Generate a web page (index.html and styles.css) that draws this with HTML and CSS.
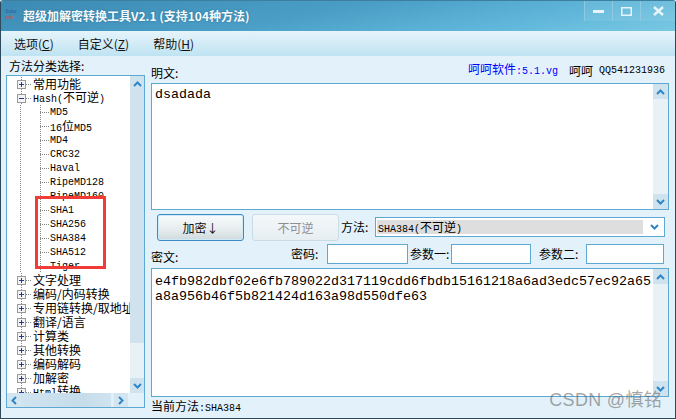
FILE: index.html
```html
<!DOCTYPE html>
<html lang="zh">
<head>
<meta charset="utf-8">
<title>超级加解密转换工具</title>
<link rel="stylesheet" href="styles.css">
</head>
<body>
<div class="window">
  <header class="titlebar">
    <div class="logo"><span class="logo-a">Suko</span><span class="logo-b">soft</span></div>
    <div class="title">超级加解密转换工具V2.1 (支持104种方法)</div>
    <div class="controls">
      <div class="ctl"><svg width="11" height="4" viewBox="0 0 11 4"><rect width="11" height="3" y="1" fill="#e8f4fa"/></svg></div>
      <div class="ctl"><svg width="11" height="9" viewBox="0 0 11 9"><rect x=".75" y=".75" width="9.5" height="7.5" fill="none" stroke="#e8f4fa" stroke-width="1.5"/></svg></div>
      <div class="ctl ctl-x"><svg width="11" height="10" viewBox="0 0 11 10"><path d="M1 1l9 8M10 1l-9 8" stroke="#e8f4fa" stroke-width="2.4"/></svg></div>
    </div>
  </header>
  <nav class="menubar">
    <span class="menu">选项(<u>C</u>)</span>
    <span class="menu">自定义(<u>Z</u>)</span>
    <span class="menu">帮助(<u>H</u>)</span>
  </nav>
  <main class="client">
    <section class="left">
      <div class="left-label">方法分类选择:</div>
      <div class="tree-box">
        <div class="tree-top">
          <div class="tree">
            <div class="row top vline-end"><svg class="box" viewBox="0 0 9 9"><rect x=".5" y=".5" width="8" height="8" fill="#f4f4f4" stroke="#9a9a9a"/><path d="M2 4.5h5M4.5 2v5" stroke="#1f3f8f"/></svg><i class="dash"></i><span class="cjk">常用功能</span></div>
            <div class="row top vline"><svg class="box" viewBox="0 0 9 9"><rect x=".5" y=".5" width="8" height="8" fill="#f4f4f4" stroke="#9a9a9a"/><path d="M2 4.5h5" stroke="#1f3f8f"/></svg><i class="dash"></i><span>Hash(<span class="cjk">不可逆</span>)</span></div>
            <div class="row child"><i class="dash2"></i><span class="leaf">MD5</span></div>
            <div class="row child"><i class="dash2"></i><span class="leaf">16<span class="cjk">位</span>MD5</span></div>
            <div class="row child"><i class="dash2"></i><span class="leaf">MD4</span></div>
            <div class="row child"><i class="dash2"></i><span class="leaf">CRC32</span></div>
            <div class="row child"><i class="dash2"></i><span class="leaf">Haval</span></div>
            <div class="row child"><i class="dash2"></i><span class="leaf">RipeMD128</span></div>
            <div class="row child"><i class="dash2"></i><span class="leaf">RipeMD160</span></div>
            <div class="row child"><i class="dash2"></i><span class="leaf">SHA1</span></div>
            <div class="row child"><i class="dash2"></i><span class="leaf">SHA256</span></div>
            <div class="row child"><i class="dash2"></i><span class="leaf">SHA384</span></div>
            <div class="row child"><i class="dash2"></i><span class="leaf">SHA512</span></div>
            <div class="row child"><i class="dash2"></i><span class="leaf">Tiger</span></div>
            <div class="row top vline"><svg class="box" viewBox="0 0 9 9"><rect x=".5" y=".5" width="8" height="8" fill="#f4f4f4" stroke="#9a9a9a"/><path d="M2 4.5h5M4.5 2v5" stroke="#1f3f8f"/></svg><i class="dash"></i><span class="cjk">文字处理</span></div>
            <div class="row top vline"><svg class="box" viewBox="0 0 9 9"><rect x=".5" y=".5" width="8" height="8" fill="#f4f4f4" stroke="#9a9a9a"/><path d="M2 4.5h5M4.5 2v5" stroke="#1f3f8f"/></svg><i class="dash"></i><span class="cjk">编码/内码转换</span></div>
            <div class="row top vline"><svg class="box" viewBox="0 0 9 9"><rect x=".5" y=".5" width="8" height="8" fill="#f4f4f4" stroke="#9a9a9a"/><path d="M2 4.5h5M4.5 2v5" stroke="#1f3f8f"/></svg><i class="dash"></i><span class="cjk">专用链转换/取地址</span></div>
            <div class="row top vline"><svg class="box" viewBox="0 0 9 9"><rect x=".5" y=".5" width="8" height="8" fill="#f4f4f4" stroke="#9a9a9a"/><path d="M2 4.5h5M4.5 2v5" stroke="#1f3f8f"/></svg><i class="dash"></i><span class="cjk">翻译/语言</span></div>
            <div class="row top vline"><svg class="box" viewBox="0 0 9 9"><rect x=".5" y=".5" width="8" height="8" fill="#f4f4f4" stroke="#9a9a9a"/><path d="M2 4.5h5M4.5 2v5" stroke="#1f3f8f"/></svg><i class="dash"></i><span class="cjk">计算类</span></div>
            <div class="row top vline"><svg class="box" viewBox="0 0 9 9"><rect x=".5" y=".5" width="8" height="8" fill="#f4f4f4" stroke="#9a9a9a"/><path d="M2 4.5h5M4.5 2v5" stroke="#1f3f8f"/></svg><i class="dash"></i><span class="cjk">其他转换</span></div>
            <div class="row top vline"><svg class="box" viewBox="0 0 9 9"><rect x=".5" y=".5" width="8" height="8" fill="#f4f4f4" stroke="#9a9a9a"/><path d="M2 4.5h5M4.5 2v5" stroke="#1f3f8f"/></svg><i class="dash"></i><span class="cjk">编码解码</span></div>
            <div class="row top vline"><svg class="box" viewBox="0 0 9 9"><rect x=".5" y=".5" width="8" height="8" fill="#f4f4f4" stroke="#9a9a9a"/><path d="M2 4.5h5M4.5 2v5" stroke="#1f3f8f"/></svg><i class="dash"></i><span class="cjk">加解密</span></div>
            <div class="row top vline"><svg class="box" viewBox="0 0 9 9"><rect x=".5" y=".5" width="8" height="8" fill="#f4f4f4" stroke="#9a9a9a"/><path d="M2 4.5h5M4.5 2v5" stroke="#1f3f8f"/></svg><i class="dash"></i><span>Html<span class="cjk">转换</span></span></div>
          </div>
          <div class="vscroll vscroll-tree">
            <div class="arrow"><svg width="9" height="6" viewBox="0 0 9 6"><path d="M1 5l3.5-3.5L8 5" fill="none" stroke="#2f86c8" stroke-width="2"/></svg></div>
            <div class="thumb thumb-tree"></div>
            <div class="track"></div>
            <div class="arrow"><svg width="9" height="6" viewBox="0 0 9 6"><path d="M1 1l3.5 3.5L8 1" fill="none" stroke="#2f86c8" stroke-width="2"/></svg></div>
          </div>
        </div>
        <div class="hscroll">
          <div class="harrow"><svg width="6" height="9" viewBox="0 0 6 9"><path d="M5 1L1.5 4.5 5 8" fill="none" stroke="#2f86c8" stroke-width="2"/></svg></div>
          <div class="hthumb"></div>
          <div class="harrow"><svg width="6" height="9" viewBox="0 0 6 9"><path d="M1 1l3.5 3.5L1 8" fill="none" stroke="#2f86c8" stroke-width="2"/></svg></div>
          <div class="hcorner"></div>
        </div>
      </div>
    </section>
    <section class="right">
      <div class="plain-head">
        <span class="lbl cjk">明文:</span>
        <span class="links"><span class="blue"><span class="cjk">呵呵软件</span>:5.1.vg</span><span class="cjk qq-name">呵呵</span><span class="qq">QQ541231936</span></span>
      </div>
      <div class="textbox plain">
        <div class="text">dsadada</div>
        <div class="vscroll">
          <div class="arrow"><svg width="9" height="6" viewBox="0 0 9 6"><path d="M1 5l3.5-3.5L8 5" fill="none" stroke="#2f86c8" stroke-width="2"/></svg></div>
          <div class="track"></div>
          <div class="arrow"><svg width="9" height="6" viewBox="0 0 9 6"><path d="M1 1l3.5 3.5L8 1" fill="none" stroke="#2f86c8" stroke-width="2"/></svg></div>
        </div>
      </div>
      <div class="actions">
        <button class="btn primary" type="button">加密↓</button>
        <button class="btn disabled" type="button">不可逆</button>
        <span class="lbl cjk method-label">方法:</span>
        <div class="select">
          <span class="select-value">SHA384(<span class="cjk">不可逆</span>)</span>
          <svg width="9" height="6" viewBox="0 0 9 6"><path d="M1 1l3.5 3.5L8 1" fill="none" stroke="#2f86c8" stroke-width="2"/></svg>
        </div>
      </div>
      <div class="params">
        <span class="lbl cjk cipher-label">密文:</span>
        <span class="lbl cjk pw-label">密码:</span>
        <div class="input in1"></div>
        <span class="lbl cjk p1-label">参数一:</span>
        <div class="input in2"></div>
        <span class="lbl cjk p2-label">参数二:</span>
        <div class="input in3"></div>
      </div>
      <div class="textbox cipher">
        <div class="text">e4fb982dbf02e6fb789022d317119cdd6fbdb15161218a6ad3edc57ec92a65<br>a8a956b46f5b821424d163a98d550dfe63</div>
        <div class="vscroll">
          <div class="arrow"><svg width="9" height="6" viewBox="0 0 9 6"><path d="M1 5l3.5-3.5L8 5" fill="none" stroke="#2f86c8" stroke-width="2"/></svg></div>
          <div class="track"></div>
          <div class="arrow"><svg width="9" height="6" viewBox="0 0 9 6"><path d="M1 1l3.5 3.5L8 1" fill="none" stroke="#2f86c8" stroke-width="2"/></svg></div>
        </div>
      </div>
      <div class="status"><span class="cjk">当前方法</span>:SHA384</div>
    </section>
  </main>
</div>
<div class="redmark"></div>
<div class="watermark">CSDN @慎铭</div>
</body>
</html>
```
FILE: styles.css
```css
* { box-sizing: border-box; }
html, body { margin: 0; padding: 0; }
body {
  width: 676px;
  height: 420px;
  overflow: hidden;
  position: relative;
  background: #fff;
  font-family: "Liberation Mono", "Noto Sans CJK SC", monospace;
  font-size: 10px;
  color: #000;
}
.cjk, .title, .menu, .btn { font-family: "Noto Sans CJK SC", "Liberation Sans", sans-serif; }
.cjk { font-size: 12px; }

.window {
  width: 676px;
  height: 419px;
  background: #e3f2fa;
  border: 1px solid #2c4a5c;
  border-top-color: #3d7f9f;
  border-radius: 3px 3px 0 0;
  display: flex;
  flex-direction: column;
  overflow: hidden;
}
.titlebar {
  height: 30px;
  flex: none;
  display: flex;
  align-items: center;
  padding-left: 4px;
  background: linear-gradient(170deg, #3b8ab4 0%, #4a9ec6 45%, #5fb6da 75%, #78c8e2 100%);
}
.logo { width: 15px; height: 16px; display: flex; flex-direction: column; font: 5px/6px "Liberation Sans", sans-serif; margin-right: 3px; }
.logo-a { color: #2a5f9a; }
.logo-b { color: #d8433a; }
.title { font-size: 12px; font-weight: 700; color: #f4fbff; text-shadow: 0 0 2px #2a6a8c; flex: 1; padding-bottom: 1px; }
.controls { display: flex; align-self: flex-start; height: 20px; }
.ctl {
  width: 28px;
  height: 20px;
  display: flex;
  align-items: center;
  justify-content: center;
  border-left: 1px solid #8ccbe2;
  background: rgba(255, 255, 255, .08);
}
.ctl-x { width: 35px; }

.menubar {
  height: 25px;
  flex: none;
  display: flex;
  align-items: center;
  padding-left: 13px;
  gap: 24px;
  background: linear-gradient(#e6f4fb, #bfe3f2);
}
.menu { font-size: 12px; color: #111; }

.client { flex: 1; display: flex; padding: 0 6px 0 5px; gap: 6px; min-height: 0; }
.left { width: 139px; flex: none; display: flex; flex-direction: column; }
.left-label { height: 19px; font: 12px/19px "Noto Sans CJK SC", sans-serif; padding: 0 0 0 3px; }
.tree-box {
  height: 333px;
  background: #fff;
  border: 1px solid #5ea8d4;
  display: flex;
  flex-direction: column;
}
.tree-top { flex: 1; display: flex; min-height: 0; }
.tree { flex: 1; overflow: hidden; padding-top: 1px; min-width: 0; }
.row {
  height: 14px;
  line-height: 14px;
  display: flex;
  align-items: center;
  white-space: nowrap;
  overflow: visible;
  background-repeat: no-repeat;
}
.row .cjk { line-height: 14px; }
.leaf { padding-top: 2px; }
.top { padding-left: 10px; }
.child {
  padding-left: 33px;
  background-image: repeating-linear-gradient(#888 0 1px, transparent 1px 2px), repeating-linear-gradient(#888 0 1px, transparent 1px 2px);
  background-size: 1px 14px, 1px 14px;
  background-position: 13px 0, 33px 0;
}
.vline, .vline-end {
  background-image: repeating-linear-gradient(#888 0 1px, transparent 1px 2px);
  background-size: 1px 14px;
  background-position: 14px 0;
}
.box { width: 9px; height: 9px; flex: none; position: relative; }
.dash { width: 5px; height: 1px; flex: none; margin: 0 2px 0 0; background: repeating-linear-gradient(90deg, #888 0 1px, transparent 1px 2px); }
.dash2 { width: 9px; height: 1px; flex: none; margin: 0 1px 0 0; background: repeating-linear-gradient(90deg, #888 0 1px, transparent 1px 2px); }

.vscroll { width: 15px; flex: none; display: flex; flex-direction: column; background: #e8f1f6; }
.vscroll-tree { width: 14px; }
.arrow { height: 15px; flex: none; display: flex; align-items: center; justify-content: center; background: #cfe3ef; }
.track { flex: 1; }
.thumb-tree { height: 252px; flex: none; background: #cfe2ed; }
.hscroll { height: 14px; flex: none; display: flex; background: #e3eff6; }
.harrow { width: 14px; flex: none; display: flex; align-items: center; justify-content: center; background: #d3e5f0; }
.hthumb { width: 90px; flex: none; background: linear-gradient(90deg, #d0e4ef, #c5dcea 70%, #d0e4ef); margin-right: 3px; }
.hcorner { flex: 1; background: #e3f2fa; }

.right { flex: 1; display: flex; flex-direction: column; min-width: 0; }
.plain-head { height: 27px; flex: none; display: flex; justify-content: space-between; align-items: flex-end; padding-bottom: 2px; }
.lbl { line-height: 16px; white-space: nowrap; }
.links { display: flex; align-items: center; padding-right: 4px; padding-bottom: 1px; line-height: 16px; }
.blue { color: #0000ff; }
.qq-name { margin-left: 11px; }
.qq { margin-left: 6px; }
.textbox { background: #fff; border: 1px solid #5ea8d4; display: flex; min-height: 0; flex: none; }
.plain { height: 127px; }
.cipher { height: 129px; }
.text { flex: 1; padding: 3px 3px; font-size: 13.33px; line-height: 15px; white-space: nowrap; overflow: hidden; }
.cipher .text { padding-top: 5px; }
.actions { height: 34px; flex: none; display: flex; align-items: center; padding-left: 6px; }
.btn { height: 27px; width: 87px; font-size: 12px; border-radius: 3px; padding: 0; flex: none; }
.primary { background: linear-gradient(#f8fbfc, #e6ecee 60%, #cfd9dd); border: 1px solid #3c8cc4; color: #111; box-shadow: inset 0 0 0 1px #cfeaf7; }
.disabled { margin-left: 8px; background: linear-gradient(#f4f8fa, #e6eef2); border: 1px solid #c9dbe5; color: #8f8f8f; }
.method-label { margin-left: 2px; width: 34px; }
.select { width: 290px; height: 20px; background: #fff; border: 1px solid #5ea8d4; display: flex; align-items: center; padding: 1px 5px 1px 1px; }
.select-value { flex: 1; background: #dedede; height: 14px; line-height: 14px; padding-left: 1px; margin-right: 7px; }
.params { height: 24px; flex: none; display: flex; align-items: flex-start; }
.params .lbl { margin-top: 2px; }
.params .cipher-label { width: 140px; margin-top: 5px; }
.pw-label { width: 36px; }
.input { height: 20px; background: #fff; border: 1px solid #5ea8d4; flex: none; }
.in1 { width: 81px; margin-right: 2px; }
.p1-label { width: 41px; }
.in2 { width: 80px; margin-right: 8px; }
.p2-label { width: 47px; }
.in3 { width: 78px; }
.status { flex: 1; padding-top: 2px; line-height: 14px; }
.status .cjk { line-height: 14px; }

.redmark { position: absolute; left: 35px; top: 196px; width: 71px; height: 73px; border: 3px solid #f23b36; }
.watermark { position: absolute; right: 14px; top: 390px; font: 18px/20px "Liberation Sans", "Noto Sans CJK SC", sans-serif; letter-spacing: .3px; color: rgba(80, 80, 80, .5); }
```
